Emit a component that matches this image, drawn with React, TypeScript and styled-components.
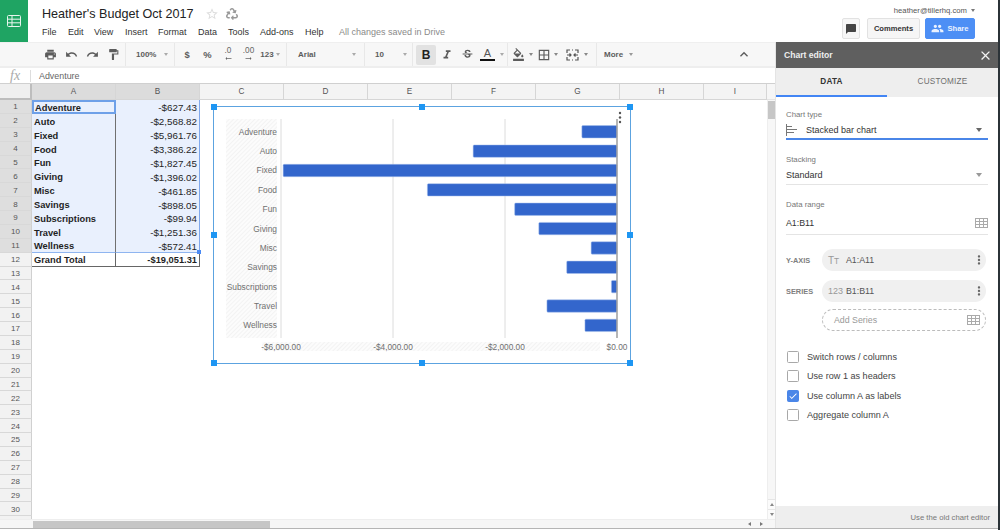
import React from "react";
import styled, { createGlobalStyle } from "styled-components";
import {
  MdPrint,
  MdUndo,
  MdRedo,
  MdFormatPaint,
  MdFormatItalic,
  MdStrikethroughS,
  MdFormatColorFill,
  MdBorderAll,
  MdKeyboardArrowUp,
  MdClose,
  MdMoreVert,
  MdPeople,
  MdChatBubble,
  MdStarBorder,
  MdCheck,
  MdArrowRightAlt,
} from "react-icons/md";
import { FaRecycle } from "react-icons/fa";

const GlobalStyle = createGlobalStyle`
  * { box-sizing: border-box; }
  html, body { margin: 0; padding: 0; background: #fff; }
  body { font-family: "Liberation Sans", Arial, sans-serif; color: #333; }
`;

const Page = styled.div`
  width: 1000px;
  height: 530px;
  overflow: hidden;
  display: flex;
  flex-direction: column;
  border-right: 2px solid #2b3338;
  position: relative;
`;

/* top header */
const Header = styled.header`
  height: 42px;
  display: flex;
  flex-shrink: 0;
  padding-right: 23px;
`;

const Logo = styled.div`
  width: 28px;
  height: 42px;
  background: #1fa463;
  display: flex;
  align-items: center;
  justify-content: center;
`;

const TitleBlock = styled.div`
  margin-left: 14px;
  padding-top: 6px;
`;

const TitleRow = styled.div`
  display: flex;
  align-items: center;
  height: 15px;
`;

const Title = styled.div`
  font-size: 12.6px;
  color: #222;
  width: 163px;
  white-space: nowrap;
`;

const MenuBar = styled.nav`
  display: flex;
  align-items: center;
  margin-top: 3px;
  height: 15px;
  font-size: 9px;
  color: #333;
`;

const MenuItem = styled.span<{ $w: number }>`
  width: ${(p) => p.$w}px;
`;

const SaveNote = styled.span`
  color: #8a8a8a;
`;

const Account = styled.div`
  margin-left: auto;
  display: flex;
  flex-direction: column;
  align-items: flex-end;
  padding-top: 5px;
`;

const Email = styled.div`
  font-size: 7.7px;
  height: 11px;
  color: #555;
  display: flex;
  align-items: center;
  gap: 4px;
`;

const TinyArrow = styled.i<{ $c?: string }>`
  display: inline-block;
  width: 0;
  height: 0;
  flex-shrink: 0;
  border-left: 2.5px solid transparent;
  border-right: 2.5px solid transparent;
  border-top: 3px solid ${(p) => p.$c || "#777"};
`;

const AccountButtons = styled.div`
  display: flex;
  margin-top: 2px;
  height: 21px;
`;

const HeadButton = styled.button`
  height: 21px;
  padding: 0;
  border: 1px solid #e2e2e2;
  border-radius: 2px;
  background: #f6f6f6;
  font: bold 7.6px "Liberation Sans", Arial, sans-serif;
  color: #333;
  display: flex;
  align-items: center;
  justify-content: center;
`;

const ChatButton = styled(HeadButton)`
  width: 18px;
  margin-right: 7px;
`;

const CommentsButton = styled(HeadButton)`
  width: 53px;
  margin-right: 5px;
`;

const ShareButton = styled(HeadButton)`
  width: 50px;
  gap: 3px;
  background: #4d8ff5;
  border-color: #4d8ff5;
  color: #eaf2ff;
`;

/* workspace */
const Workspace = styled.div`
  flex: 1;
  display: flex;
  min-height: 0;
`;

const Main = styled.main`
  width: 775px;
  display: flex;
  flex-direction: column;
`;

const Toolbar = styled.div`
  height: 26px;
  display: flex;
  background: #f7f7f7;
  border-top: 1px solid #efefef;
  border-bottom: 2px solid #eee;
  color: #666;
`;

const ToolGroup = styled.div<{ $w: number; $pad?: number }>`
  width: ${(p) => p.$w}px;
  padding-left: ${(p) => p.$pad || 0}px;
  display: flex;
  align-items: center;
  border-right: 1px solid #e8e8e8;
  flex-shrink: 0;
`;

const LastGroup = styled(ToolGroup)`
  border-right: 0;
  flex: 1;
`;

const Slot = styled.span<{ $w: number; $ml?: number }>`
  width: ${(p) => p.$w}px;
  margin-left: ${(p) => p.$ml || 0}px;
  flex-shrink: 0;
  display: flex;
  align-items: center;
  justify-content: center;
  font-size: 8px;
  font-weight: 700;
  color: #5c5c5c;
`;

const TextSlot = styled(Slot)`
  justify-content: flex-start;
`;

const SymbolSlot = styled(Slot)`
  font-size: 9.4px;
`;

const DecimalSlot = styled(Slot)`
  font-size: 8.2px;
  font-weight: 400;
  flex-direction: column;
  line-height: 7px;
  height: 16px;
  color: #666;
`;

const SpacedArrow = styled(TinyArrow)<{ $ml?: number }>`
  margin-left: ${(p) => p.$ml || 0}px;
`;

const BoldBox = styled.span`
  width: 20px;
  height: 20px;
  margin-left: 3px;
  margin-right: 1px;
  background: #e2e2e2;
  border-radius: 2px;
  display: flex;
  align-items: center;
  justify-content: center;
  font-size: 12px;
  font-weight: 700;
  color: #222;
`;

const ColorA = styled.span`
  width: 15px;
  display: flex;
  flex-direction: column;
  align-items: center;
  font-size: 11px;
  line-height: 11px;
  color: #555;
  border-bottom: 2px solid #111;
  margin-left: 2px;
  margin-right: 5px;
`;

const FormulaBar = styled.div`
  height: 16px;
  display: flex;
  align-items: center;
  background: #fff;
  border-bottom: 1px solid #d0d0d0;
`;

const Fx = styled.span`
  width: 31px;
  padding-left: 10px;
  font: italic 14px "Liberation Serif", serif;
  color: #aaa;
  border-right: 1px solid #ddd;
  height: 12px;
  line-height: 11px;
`;

const FormulaText = styled.span`
  margin-left: 8px;
  font-size: 8.9px;
  color: #666;
`;

const ColumnHeads = styled.div`
  height: 16px;
  display: flex;
  background: #f4f4f4;
`;

const Corner = styled.div`
  width: 32px;
  background: #efefef;
  border-right: 2px solid #bdbdbd;
  border-bottom: 2px solid #bdbdbd;
`;

const ColHead = styled.div<{ $on?: boolean; $w?: number }>`
  width: ${(p) => p.$w || 84}px;
  display: flex;
  align-items: center;
  justify-content: center;
  font-size: 8.2px;
  color: #555;
  background: ${(p) => (p.$on ? "#dcdcdc" : "#f4f4f4")};
  border-right: 1px solid #d6d6d6;
  border-bottom: 1px solid #d6d6d6;
`;

const ColFiller = styled.div`
  flex: 1;
  background: #f6f6f6;
  border-bottom: 1px solid #e4e4e4;
`;

const SheetRow = styled.div`
  height: 419px;
  display: flex;
`;

const Sheet = styled.div`
  width: 767px;
  position: relative;
  overflow: hidden;
`;

const Rows = styled.div`
  display: grid;
  grid-auto-rows: 13.89px;
`;

const Row = styled.div`
  display: flex;
`;

const RowHead = styled.div<{ $on?: boolean }>`
  width: 32px;
  display: flex;
  align-items: center;
  justify-content: center;
  padding-top: 1px;
  font-size: 8px;
  color: #555;
  background: ${(p) => (p.$on ? "#dedede" : "#f2f2f2")};
  border-right: 1px solid #d0d0d0;
  border-bottom: 1px solid #d8d8d8;
`;

const Cell = styled.div<{
  $on?: boolean;
  $num?: boolean;
  $active?: boolean;
  $total?: boolean;
  $last?: boolean;
}>`
  width: 84px;
  display: flex;
  align-items: center;
  justify-content: ${(p) => (p.$num ? "flex-end" : "flex-start")};
  padding: ${(p) => (p.$num ? "2px 2px 0 0" : "2px 0 0 2px")};
  font-size: ${(p) => (p.$num && !p.$total ? 9.8 : 9.3)}px;
  font-weight: ${(p) => (p.$num && !p.$total ? 400 : 700)};
  color: #1f1f1f;
  background: ${(p) => (p.$on ? "#e9f0fd" : "#fff")};
  border-right: 1px solid ${(p) => (p.$num ? "#7fa8ec" : "#707070")};
  ${(p) => p.$last && "border-bottom: 1px solid #8fb5f0;"}
  ${(p) =>
    p.$total &&
    `border-bottom: 1px solid #666; border-right-color: #666;`}
  ${(p) => p.$active && "border: 1px solid #6ea0e8; outline: 1px solid #6ea0e8; outline-offset: -2px;"}
`;

const FillHandle = styled.span`
  position: absolute;
  left: 197px;
  top: 150px;
  width: 4px;
  height: 4px;
  background: #4a8af4;
`;

const ChartFrame = styled.div`
  position: absolute;
  left: 213px;
  top: 6px;
  width: 418px;
  height: 258px;
  border: 1px solid #5ca3e0;
  background: #fff;
`;

const ChartSvg = styled.svg`
  display: block;
  position: absolute;
  left: -1px;
  top: -1px;
`;

const Handle = styled.span<{ $x: number; $y: number }>`
  position: absolute;
  left: calc(${(p) => p.$x}% - 3px);
  top: calc(${(p) => p.$y}% - 3px);
  width: 6px;
  height: 6px;
  background: #1e96f3;
`;

const VScroll = styled.div`
  width: 8px;
  background: #f7f7f7;
  border-left: 1px solid #eee;
  display: flex;
  flex-direction: column;
  padding-top: 1px;
`;

const VThumb = styled.div`
  height: 18px;
  background: #c6c6c6;
  margin-bottom: auto;
`;

const VArrow = styled.div`
  height: 10px;
  background: #fbfbfb;
  border-top: 1px solid #e6e6e6;
  display: flex;
  align-items: center;
  justify-content: center;
`;

const UpArrow = styled(TinyArrow)`
  transform: rotate(180deg);
`;

const HScroll = styled.div`
  height: 9px;
  display: flex;
  align-items: center;
  background: #f6f6f6;
  border-top: 1px solid #eee;
  padding-left: 33px;
  padding-right: 12px;
`;

const HThumb = styled.div`
  width: 237px;
  height: 7px;
  background: #c6c6c6;
  margin-right: auto;
`;

const SideArrow = styled.i<{ $dir: "l" | "r" }>`
  width: 0;
  height: 0;
  margin-left: 9px;
  border-top: 2.5px solid transparent;
  border-bottom: 2.5px solid transparent;
  ${(p) => (p.$dir === "l" ? "border-right: 3px solid #777;" : "border-left: 3px solid #777;")}
`;

const BottomStrip = styled.div`
  height: 2px;
  flex-shrink: 0;
  background: #fff;
  border-top: 1px solid #b5b5b5;
`;

/* chart editor */
const Editor = styled.aside`
  width: 223px;
  display: flex;
  flex-direction: column;
  background: #fff;
  border-left: 1px solid #e4e4e4;
`;

const EditorHead = styled.div`
  height: 26px;
  background: #5f5f5f;
  color: #eee;
  font-size: 8.6px;
  font-weight: 700;
  display: flex;
  align-items: center;
  justify-content: space-between;
  padding: 0 5px 0 8px;
`;

const Tabs = styled.div`
  height: 29px;
  display: flex;
  background: #eee;
`;

const Tab = styled.div<{ $on?: boolean }>`
  flex: 1;
  display: flex;
  align-items: center;
  justify-content: center;
  font-size: 8.2px;
  font-weight: ${(p) => (p.$on ? 700 : 400)};
  letter-spacing: 0.2px;
  color: ${(p) => (p.$on ? "#333" : "#6f6f6f")};
  border-bottom: 2px solid ${(p) => (p.$on ? "#4285f4" : "transparent")};
`;

const EditorBody = styled.div`
  flex: 1;
  padding: 12px 10px 0 10px;
  display: flex;
  flex-direction: column;
`;

const FieldLabel = styled.div`
  font-size: 7.8px;
  color: #777;
  height: 12px;
  line-height: 12px;
`;

const SelectRow = styled.div<{ $active?: boolean; $h: number; $mb: number }>`
  height: ${(p) => p.$h}px;
  margin-bottom: ${(p) => p.$mb}px;
  display: flex;
  align-items: center;
  color: #333;
  border-bottom: ${(p) => (p.$active ? "2px solid #4a86e8" : "1px solid #e4e4e4")};
`;

const SelectText = styled.span<{ $indent?: number; $small?: boolean }>`
  margin-left: ${(p) => p.$indent || 0}px;
  margin-right: auto;
  font-size: ${(p) => (p.$small ? 8.8 : 9)}px;
`;

const SelectArrow = styled(TinyArrow)`
  margin-right: 6px;
  border-left-width: 3px;
  border-right-width: 3px;
  border-top-width: 4px;
`;

const SeriesRow = styled.div`
  display: flex;
  align-items: center;
  height: 22px;
  margin-bottom: 9px;
`;

const SeriesLabel = styled.span`
  width: 36px;
  font-size: 7.4px;
  font-weight: 700;
  color: #808080;
`;

const Pill = styled.div`
  width: 164px;
  height: 22px;
  border-radius: 11px;
  background: #f0f0f0;
  display: flex;
  align-items: center;
  padding-left: 6px;
  font-size: 8.8px;
  color: #555;
`;

const PillGlyph = styled.span<{ $size: number }>`
  width: 17px;
  font-size: ${(p) => p.$size}px;
  color: #999;
  flex-shrink: 0;
`;

const PillText = styled.span`
  margin-left: 1px;
  margin-right: auto;
`;

const AddSeries = styled(Pill)`
  margin-left: 36px;
  margin-top: -2px;
  margin-bottom: 16px;
  background: #fff;
  border: 1px dashed #bcbcbc;
  padding: 0 5px 0 11px;
  color: #999;
  justify-content: space-between;
`;

const CheckRow = styled.label`
  height: 19.5px;
  display: flex;
  align-items: center;
  font-size: 9.1px;
  color: #444;
`;

const CheckBox = styled.span<{ $on?: boolean }>`
  width: 12px;
  height: 12px;
  margin-left: 1px;
  margin-right: 8px;
  border-radius: 1.5px;
  border: 1px solid ${(p) => (p.$on ? "#4a86e8" : "#a8a8a8")};
  background: ${(p) => (p.$on ? "#4a86e8" : "#fff")};
  display: flex;
  align-items: center;
  justify-content: center;
`;

const EditorFoot = styled.div`
  height: 22px;
  background: #eee;
  font-size: 7.7px;
  color: #777;
  display: flex;
  align-items: center;
  justify-content: flex-end;
  padding-right: 8px;
`;

const SheetGlyph = () => (
  <svg width="14" height="12" viewBox="0 0 14 12" fill="none" stroke="#e8f5ee" strokeWidth="1">
    <rect x="0.5" y="0.5" width="13" height="11" rx="1" />
    <path d="M0.5 4.2h13M0.5 7.8h13M5 0.5v11" />
  </svg>
);

const TableGlyph = () => (
  <svg width="13" height="10" viewBox="0 0 13 10" fill="none" stroke="#aaa" strokeWidth="1">
    <rect x="0.5" y="0.5" width="12" height="9" />
    <path d="M0.5 3.5h12M0.5 6.5h12M4.5 0.5v9M8.5 0.5v9" />
  </svg>
);

const MergeGlyph = () => (
  <svg width="13" height="12" viewBox="0 0 13 12" fill="none" stroke="#555" strokeWidth="1.2">
    <path d="M1 4V1h3M9 1h3v3M1 8v3h3M9 11h3V8M6 1h1M6 11h1" />
    <path d="M1 6h4M8 6h4M3.5 4.5 5 6 3.5 7.5M9.500 4.5 8 6 9.500 7.5" />
  </svg>
);

const BarTypeGlyph = () => (
  <svg width="11" height="12" viewBox="0 0 11 12" fill="none" stroke="#777" strokeWidth="1">
    <path d="M0.5 0v12M1 2.500h5M1 5.500h10M1 8.500h7" />
  </svg>
);

const SmallArrow = styled(MdArrowRightAlt)<{ $flip?: boolean }>`
  ${(p) => p.$flip && "transform: scaleX(-1);"}
`;

const ROWS: [string, string][] = [
  ["Adventure", "-$627.43"],
  ["Auto", "-$2,568.82"],
  ["Fixed", "-$5,961.76"],
  ["Food", "-$3,386.22"],
  ["Fun", "-$1,827.45"],
  ["Giving", "-$1,396.02"],
  ["Misc", "-$461.85"],
  ["Savings", "-$898.05"],
  ["Subscriptions", "-$99.94"],
  ["Travel", "-$1,251.36"],
  ["Wellness", "-$572.41"],
];

const ZERO_X = 617;
const PX_PER_DOLLAR = 0.056;
const TOP_Y = 119;
const BOTTOM_Y = 338;
const STEP = 19.36;

const Chart = () => (
  <ChartSvg width="418" height="258" viewBox="213 106 418 258">
    <defs>
      <pattern id="hatch" width="3" height="3" patternUnits="userSpaceOnUse" patternTransform="rotate(45)">
        <rect width="3" height="3" fill="#fcfcfc" />
        <rect width="1" height="3" fill="#f3f3f3" />
      </pattern>
    </defs>
    <rect x="226" y={TOP_Y} width="51" height={BOTTOM_Y - TOP_Y} fill="url(#hatch)" />
    <rect x="262" y="342" width="338" height="9" fill="url(#hatch)" />
    {[281, 393, 505].map((x) => (
      <line key={x} x1={x} x2={x} y1={TOP_Y} y2={BOTTOM_Y} stroke="#dcdcdc" strokeWidth="1" />
    ))}
    {ROWS.map(([name, value], i) => {
      const amount = Math.abs(parseFloat(value.replace(/[-$,]/g, "")));
      const w = amount * PX_PER_DOLLAR;
      const cy = TOP_Y + STEP * (i + 0.66);
      return (
        <g key={name}>
          <text x="277" y={cy + 3} textAnchor="end" fontSize="8.4" fill="#707070" fontFamily="Liberation Sans">
            {name}
          </text>
          <rect x={ZERO_X - w} y={cy - 6.2} width={w} height="12.4" rx="1" fill="#3366cc" stroke="#a9c1ec" strokeWidth="0.5" />
        </g>
      );
    })}
    <line x1={ZERO_X} x2={ZERO_X} y1={TOP_Y} y2={BOTTOM_Y} stroke="#9e9e9e" strokeWidth="1.5" />
    {[
      [281, "-$6,000.00"],
      [393, "-$4,000.00"],
      [505, "-$2,000.00"],
      [617, "$0.00"],
    ].map(([x, label]) => (
      <text key={label} x={x} y="349.500" textAnchor="middle" fontSize="8.300" fill="#707070" fontFamily="Liberation Sans">
        {label}
      </text>
    ))}
    <g fill="#555">
      <circle cx="620" cy="113" r="1.2" />
      <circle cx="620" cy="117.500" r="1.2" />
      <circle cx="620" cy="122" r="1.2" />
    </g>
  </ChartSvg>
);

const HANDLES = [
  [0, 0],
  [50, 0],
  [100, 0],
  [0, 50],
  [100, 50],
  [0, 100],
  [50, 100],
  [100, 100],
];

export default function App() {
  const rowNumbers = Array.from({ length: 31 }, (_, i) => i + 1);

  return (
    <>
      <GlobalStyle />
      <Page>
        <Header>
          <Logo>
            <SheetGlyph />
          </Logo>
          <TitleBlock>
            <TitleRow>
              <Title>Heather's Budget Oct 2017</Title>
              <MdStarBorder size={14} color="#ddd" />
              <FaRecycle size={12} color="#999" style={{ marginLeft: 7 }} />
            </TitleRow>
            <MenuBar>
              <MenuItem $w={26}>File</MenuItem>
              <MenuItem $w={26}>Edit</MenuItem>
              <MenuItem $w={31}>View</MenuItem>
              <MenuItem $w={33}>Insert</MenuItem>
              <MenuItem $w={40}>Format</MenuItem>
              <MenuItem $w={30}>Data</MenuItem>
              <MenuItem $w={32}>Tools</MenuItem>
              <MenuItem $w={45}>Add-ons</MenuItem>
              <MenuItem $w={34}>Help</MenuItem>
              <SaveNote>All changes saved in Drive</SaveNote>
            </MenuBar>
          </TitleBlock>
          <Account>
            <Email>
              heather@tillerhq.com <TinyArrow />
            </Email>
            <AccountButtons>
              <ChatButton>
                <MdChatBubble size={12} color="#444" />
              </ChatButton>
              <CommentsButton>Comments</CommentsButton>
              <ShareButton>
                <MdPeople size={13} />
                Share
              </ShareButton>
            </AccountButtons>
          </Account>
        </Header>

        <Workspace>
          <Main>
            <Toolbar>
              <ToolGroup $w={126} $pad={40}>
                <Slot $w={21}><MdPrint size={13} /></Slot>
                <Slot $w={21}><MdUndo size={13} /></Slot>
                <Slot $w={21}><MdRedo size={13} /></Slot>
                <Slot $w={20}><MdFormatPaint size={13} /></Slot>
              </ToolGroup>
              <ToolGroup $w={49} $pad={10}>
                <TextSlot $w={28}>100%</TextSlot>
                <TinyArrow $c="#aaa" />
              </ToolGroup>
              <ToolGroup $w={112} $pad={2}>
                <SymbolSlot $w={20}>$</SymbolSlot>
                <SymbolSlot $w={21}>%</SymbolSlot>
                <DecimalSlot $w={20}>
                  .0
                  <SmallArrow size={9} $flip />
                </DecimalSlot>
                <DecimalSlot $w={21}>
                  .00
                  <SmallArrow size={9} />
                </DecimalSlot>
                <Slot $w={16}>123</Slot>
                <SpacedArrow $c="#aaa" $ml={1} />
              </ToolGroup>
              <ToolGroup $w={78} $pad={11}>
                <TextSlot $w={54}>Arial</TextSlot>
                <TinyArrow $c="#aaa" />
              </ToolGroup>
              <ToolGroup $w={48} $pad={10}>
                <TextSlot $w={28}>10</TextSlot>
                <TinyArrow $c="#aaa" />
              </ToolGroup>
              <ToolGroup $w={95}>
                <BoldBox>B</BoldBox>
                <Slot $w={20}><MdFormatItalic size={14} /></Slot>
                <Slot $w={21}><MdStrikethroughS size={13} /></Slot>
                <ColorA>A</ColorA>
                <TinyArrow $c="#aaa" />
              </ToolGroup>
              <ToolGroup $w={89} $pad={2}>
                <Slot $w={16}><MdFormatColorFill size={13} /></Slot>
                <SpacedArrow $c="#888" $ml={2.5} />
                <Slot $w={17} $ml={3}><MdBorderAll size={14} /></Slot>
                <SpacedArrow $c="#888" $ml={1} />
                <Slot $w={23} $ml={3}><MergeGlyph /></Slot>
                <TinyArrow $c="#888" />
              </ToolGroup>
              <LastGroup $w={177} $pad={7}>
                <TextSlot $w={25}>More</TextSlot>
                <TinyArrow $c="#999" />
                <Slot $w={16} $ml={103}><MdKeyboardArrowUp size={17} /></Slot>
              </LastGroup>
            </Toolbar>

            <FormulaBar>
              <Fx>fx</Fx>
              <FormulaText>Adventure</FormulaText>
            </FormulaBar>

            <ColumnHeads>
              <Corner />
              {["A", "B", "C", "D", "E", "F", "G", "H"].map((c, i) => (
                <ColHead key={c} $on={i < 2}>{c}</ColHead>
              ))}
              <ColHead $w={63}>I</ColHead>
              <ColFiller />
            </ColumnHeads>

            <SheetRow>
              <Sheet>
                <Rows>
                  {rowNumbers.map((n) => {
                    const data = ROWS[n - 1];
                    return (
                      <Row key={n}>
                        <RowHead $on={n <= 11}>{n <= 30 ? n : ""}</RowHead>
                        {data && (
                          <>
                            <Cell $on $active={n === 1} $last={n === 11}>{data[0]}</Cell>
                            <Cell $on $num $last={n === 11}>{data[1]}</Cell>
                          </>
                        )}
                        {n === 12 && (
                          <>
                            <Cell $total>Grand Total</Cell>
                            <Cell $total $num>-$19,051.31</Cell>
                          </>
                        )}
                      </Row>
                    );
                  })}
                </Rows>
                <FillHandle />
                <ChartFrame>
                  <Chart />
                  {HANDLES.map(([x, y]) => (
                    <Handle key={`${x}-${y}`} $x={x} $y={y} />
                  ))}
                </ChartFrame>
              </Sheet>
              <VScroll>
                <VThumb />
                <VArrow><UpArrow $c="#888" /></VArrow>
                <VArrow><TinyArrow $c="#888" /></VArrow>
              </VScroll>
            </SheetRow>

            <HScroll>
              <HThumb />
              <SideArrow $dir="l" />
              <SideArrow $dir="r" />
            </HScroll>
          </Main>

          <Editor>
            <EditorHead>
              Chart editor
              <MdClose size={15} color="#f2f2f2" />
            </EditorHead>
            <Tabs>
              <Tab $on>DATA</Tab>
              <Tab>CUSTOMIZE</Tab>
            </Tabs>
            <EditorBody>
              <FieldLabel>Chart type</FieldLabel>
              <SelectRow $active $h={19} $mb={14}>
                <BarTypeGlyph />
                <SelectText $indent={9}>Stacked bar chart</SelectText>
                <SelectArrow $c="#666" />
              </SelectRow>
              <FieldLabel>Stacking</FieldLabel>
              <SelectRow $h={19} $mb={14}>
                <SelectText>Standard</SelectText>
                <SelectArrow $c="#999" />
              </SelectRow>
              <FieldLabel>Data range</FieldLabel>
              <SelectRow $h={24} $mb={14}>
                <SelectText $small>A1:B11</SelectText>
                <TableGlyph />
              </SelectRow>
              <SeriesRow>
                <SeriesLabel>Y-AXIS</SeriesLabel>
                <Pill>
                  <PillGlyph $size={10}>T<small>T</small></PillGlyph>
                  <PillText>A1:A11</PillText>
                  <MdMoreVert size={14} color="#666" />
                </Pill>
              </SeriesRow>
              <SeriesRow>
                <SeriesLabel>SERIES</SeriesLabel>
                <Pill>
                  <PillGlyph $size={9}>123</PillGlyph>
                  <PillText>B1:B11</PillText>
                  <MdMoreVert size={14} color="#666" />
                </Pill>
              </SeriesRow>
              <AddSeries>
                Add Series
                <TableGlyph />
              </AddSeries>
              <CheckRow>
                <CheckBox />
                Switch rows / columns
              </CheckRow>
              <CheckRow>
                <CheckBox />
                Use row 1 as headers
              </CheckRow>
              <CheckRow>
                <CheckBox $on>
                  <MdCheck size={10} color="#fff" />
                </CheckBox>
                Use column A as labels
              </CheckRow>
              <CheckRow>
                <CheckBox />
                Aggregate column A
              </CheckRow>
            </EditorBody>
            <EditorFoot>Use the old chart editor</EditorFoot>
          </Editor>
        </Workspace>
        <BottomStrip />
      </Page>
    </>
  );
}
